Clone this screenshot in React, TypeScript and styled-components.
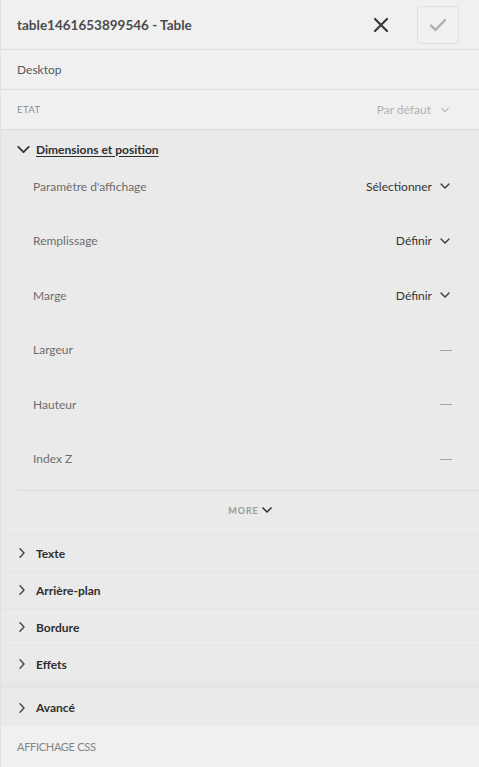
import React from "react";
import styled, { createGlobalStyle } from "styled-components";

const GlobalStyle = createGlobalStyle`
  html, body {
    margin: 0;
    padding: 0;
    background: #f0f0f0;
  }
  body {
    font-family: Lato, "Liberation Sans", sans-serif;
  }
`;

const Panel = styled.div`
  width: 479px;
  min-height: 767px;
  box-sizing: border-box;
  border-left: 1px solid #e2e2e2;
  display: flex;
  flex-direction: column;
  background: #eaeaea;
`;

const Header = styled.div`
  height: 49px;
  display: flex;
  align-items: center;
  padding: 0 20px 0 16px;
  border-bottom: 1px solid #dddddd;
  background: #f0f0f0;
`;

const Title = styled.h1`
  flex: 1;
  margin: 0;
  font-size: 13.5px;
  font-weight: 700;
  color: #4b4b4b;
`;

const IconButton = styled.button`
  border: none;
  background: transparent;
  padding: 0;
  width: 20px;
  height: 20px;
  display: flex;
  align-items: center;
  justify-content: center;
  margin-right: 26px;
`;

const ConfirmButton = styled.button`
  width: 42px;
  height: 38px;
  box-sizing: border-box;
  border: 1px solid #dedede;
  border-radius: 4px;
  background: #f0f0f0;
  display: flex;
  align-items: center;
  justify-content: center;
  padding: 0;
`;

const InfoRow = styled.div`
  height: 39px;
  display: flex;
  align-items: center;
  padding: 0 30px 0 16px;
  border-bottom: 1px solid #dddddd;
  background: #f0f0f0;
`;

const InfoText = styled.span`
  font-size: 12px;
  color: #575757;
`;

const SmallCaps = styled.span`
  flex: 1;
  font-size: 9.5px;
  letter-spacing: 0.4px;
  color: #8c8c8c;
`;

const MutedValue = styled.span`
  display: flex;
  align-items: center;
  gap: 10px;
  font-size: 12px;
  color: #b0b0b0;
`;

const OpenSection = styled.section`
  padding-top: 9px;
`;

const SectionHead = styled.div<{ $open?: boolean; $tall?: boolean }>`
  height: ${(p) => (p.$open ? "20px" : p.$tall ? "37px" : "36px")};
  display: flex;
  align-items: center;
  gap: ${(p) => (p.$open ? "6px" : "9px")};
  padding-left: 16px;
`;

const ClosedSection = styled.section`
  border-top: 1px solid #e4e4e4;
`;

const SectionTitle = styled.span<{ $open?: boolean }>`
  font-size: 12px;
  font-weight: 700;
  color: #2f2f2f;
  text-decoration: ${(p) => (p.$open ? "underline" : "none")};
  text-underline-offset: 2px;
`;

const PropList = styled.div`
  display: flex;
  flex-direction: column;
  padding: 0 29px 0 32px;
`;

const PropRow = styled.div`
  height: 54.5px;
  display: flex;
  align-items: center;
  justify-content: space-between;
`;

const PropLabel = styled.span`
  font-size: 12px;
  color: #6c6c6c;
`;

const PropValue = styled.span`
  display: flex;
  align-items: center;
  gap: 8px;
  font-size: 12px;
  color: #343434;
`;

const Dash = styled.span`
  font-family: "Liberation Sans", sans-serif;
  font-size: 12px;
  color: #a4a4a4;
  margin-right: -2px;
`;

const Divider = styled.hr`
  margin: 4px 0 0 16px;
  border: none;
  border-top: 1px solid #dcdcdc;
`;

const MoreButton = styled.div`
  height: 43px;
  box-sizing: border-box;
  padding: 0 0 5px 20px;
  display: flex;
  align-items: center;
  justify-content: center;
  gap: 3px;
  font-size: 9px;
  font-weight: 700;
  letter-spacing: 0.9px;
  color: #9a9a9a;
`;

const Spacer = styled.div`
  height: 7px;
  background: #e6e6e6;
`;

const Footer = styled.div`
  height: 40px;
  display: flex;
  align-items: center;
  padding-left: 16px;
  background: #f0f0f0;
  font-size: 11px;
  letter-spacing: -0.3px;
  color: #848484;
  flex: 1;
`;

const Chevron = ({ dir, color, size = 10, w = 1.6 }: { dir: "down" | "right"; color: string; size?: number; w?: number }) => (
  <svg width={size} height={size} viewBox="0 0 10 10" fill="none">
    {dir === "down" ? (
      <path d="M1 3 L5 7 L9 3" stroke={color} strokeWidth={w} strokeLinecap="round" strokeLinejoin="round" />
    ) : (
      <path d="M3 0.8 L7 5 L3 9.2" stroke={color} strokeWidth={w} strokeLinecap="round" strokeLinejoin="round" />
    )}
  </svg>
);

const props = [
  { label: "Paramètre d'affichage", value: "Sélectionner" },
  { label: "Remplissage", value: "Définir" },
  { label: "Marge", value: "Définir" },
  { label: "Largeur" },
  { label: "Hauteur" },
  { label: "Index Z" },
];

const collapsed = ["Texte", "Arrière-plan", "Bordure", "Effets"];

export default function App() {
  return (
    <>
      <GlobalStyle />
      <Panel>
        <Header>
          <Title>table1461653899546 - Table</Title>
          <IconButton aria-label="Fermer">
            <svg width="16" height="16" viewBox="0 0 16 16">
              <path d="M2 2 L14 14 M14 2 L2 14" stroke="#3a3a3a" strokeWidth="2.2" strokeLinecap="round" />
            </svg>
          </IconButton>
          <ConfirmButton aria-label="Valider">
            <svg width="18" height="14" viewBox="0 0 18 14">
              <path d="M2 7.5 L6.5 12 L16 2" stroke="#aeaeae" strokeWidth="2.4" fill="none" strokeLinecap="round" strokeLinejoin="round" />
            </svg>
          </ConfirmButton>
        </Header>
        <InfoRow>
          <InfoText>Desktop</InfoText>
        </InfoRow>
        <InfoRow>
          <SmallCaps>ETAT</SmallCaps>
          <MutedValue>
            Par défaut
            <Chevron dir="down" color="#b4b4b4" size={8} w={1.4} />
          </MutedValue>
        </InfoRow>
        <OpenSection>
          <SectionHead $open>
            <Chevron dir="down" color="#3a3a3a" size={13} w={1.5} />
            <SectionTitle $open>Dimensions et position</SectionTitle>
          </SectionHead>
          <PropList>
            {props.map((p) => (
              <PropRow key={p.label}>
                <PropLabel>{p.label}</PropLabel>
                {p.value ? (
                  <PropValue>
                    {p.value}
                    <Chevron dir="down" color="#3a3a3a" size={10} w={1.4} />
                  </PropValue>
                ) : (
                  <Dash>—</Dash>
                )}
              </PropRow>
            ))}
          </PropList>
          <Divider />
          <MoreButton>
            MORE
            <Chevron dir="down" color="#3a3a3a" size={10} w={1.7} />
          </MoreButton>
        </OpenSection>
        {collapsed.map((c) => (
          <ClosedSection key={c}>
            <SectionHead>
              <Chevron dir="right" color="#4a4a4a" size={10} w={1.5} />
              <SectionTitle>{c}</SectionTitle>
            </SectionHead>
          </ClosedSection>
        ))}
        <Spacer />
        <SectionHead $tall>
          <Chevron dir="right" color="#4a4a4a" size={10} w={1.5} />
          <SectionTitle>Avancé</SectionTitle>
        </SectionHead>
        <Footer>AFFICHAGE CSS</Footer>
      </Panel>
    </>
  );
}
